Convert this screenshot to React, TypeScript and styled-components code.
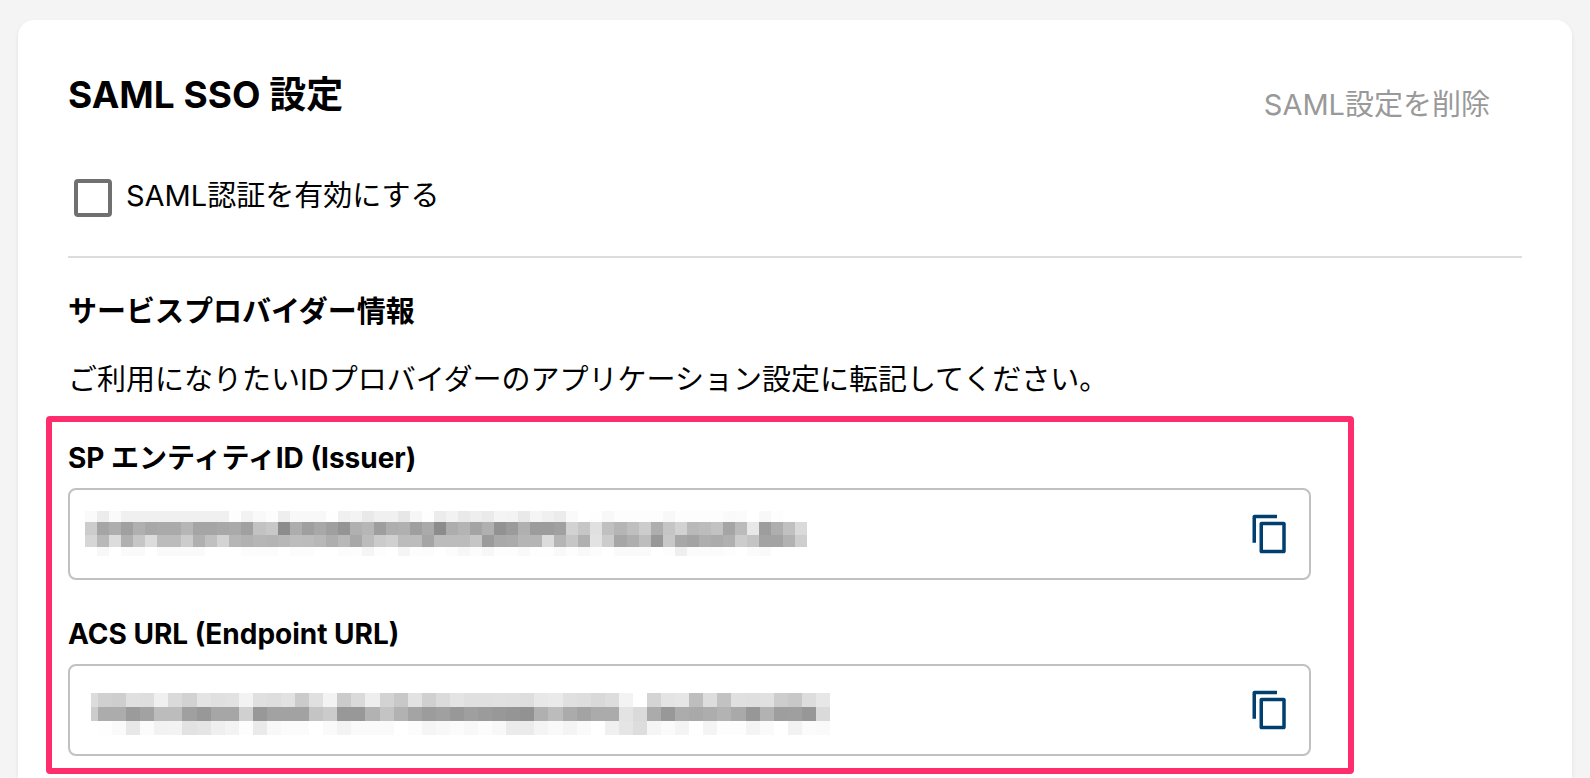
import React, { useId, useState } from "react";
import styled, { createGlobalStyle } from "styled-components";

const GlobalStyle = createGlobalStyle`
  *, *::before, *::after { box-sizing: border-box; }
  body {
    margin: 0;
    background: #f4f4f4;
    color: #000;
    font-family: Inter, "Noto Sans CJK JP", sans-serif;
    font-size: 29px;
    line-height: 40px;
  }
  h1, h2, p { margin: 0; }
`;

const Page = styled.main`
  display: flex;
  flex-direction: column;
  min-height: 100vh;
  padding: 20px 18px 0;
`;

const Card = styled.section`
  flex: 1;
  padding: 48px 50px 4px;
  background: #fff;
  border-radius: 16px 16px 0 0;
  box-shadow: 0 2px 4px rgba(0, 0, 0, 0.08);
`;

const Header = styled.header`
  display: flex;
  justify-content: space-between;
  align-items: flex-start;
`;

const Title = styled.h1`
  font-size: 37px;
  line-height: 54px;
  font-weight: 700;
`;

const DeleteButton = styled.button`
  margin: 17px 32px 0 0;
  padding: 0;
  border: 0;
  background: none;
  color: #999;
  font: inherit;
  cursor: pointer;
`;

const EnableRow = styled.label`
  display: flex;
  align-items: center;
  gap: 14px;
  width: fit-content;
  margin-top: 50px;
  padding-left: 6px;
  cursor: pointer;
`;

const Checkbox = styled.input`
  appearance: none;
  width: 38px;
  height: 38px;
  margin: 4px 0 0;
  border: 4px solid #707070;
  border-radius: 4px;
  background: #fff;

  &:checked {
    background: #707070;
  }
`;

const Divider = styled.hr`
  height: 2px;
  margin: 39px 0 0;
  border: 0;
  background: #dcdcdc;
`;

const SectionTitle = styled.h2`
  margin-top: 34px;
  font-size: 29px;
  font-weight: 700;
`;

const Description = styled.p`
  margin-top: 28px;
`;

const Highlight = styled.div`
  display: grid;
  gap: 34px;
  margin: 16px 168px 0 -22px;
  padding: 16px 37px 12px 16px;
  border: 6px solid #ff2d6e;
  border-radius: 4px;
`;

const Field = styled.div`
  display: grid;
  gap: 10px;
`;

const FieldLabel = styled.label`
  font-size: 28px;
  font-weight: 700;
`;

const FieldBox = styled.div`
  position: relative;
  display: flex;
  align-items: center;
  height: 92px;
  padding-right: 18px;
  border: 2px solid #c1c1c1;
  border-radius: 8px;
`;

const FieldInput = styled.input`
  flex: 1;
  min-width: 0;
  height: 100%;
  padding: 0 16px;
  border: 0;
  outline: 0;
  background: transparent;
  font: inherit;
`;

const CopyButton = styled.button`
  display: flex;
  padding: 0;
  border: 0;
  background: none;
  color: #003f70;
  cursor: pointer;
`;

const Mosaic = styled.svg<{ $left: number; $top: number }>`
  position: absolute;
  left: ${(p) => p.$left}px;
  top: ${(p) => p.$top}px;
  pointer-events: none;
`;

interface MaskData {
  left: number;
  top: number;
  width: number;
  lead: number;
  heights: number[];
  rows: string[];
}

/* Grey levels of the redaction mosaics, two hex digits per block. */
const entityMask: MaskData = {
  left: 15,
  top: 21,
  width: 722,
  lead: 0,
  heights: [11, 13, 12, 9],
  rows: [
    "faecfaf0f0f0f0f0f0f0f0f0fdf2f9fdeef8f8f8fef0f3e9f0f0e7f6feec" +
      "f2e9eeeaf4f3e9f5f0ecfafffef8fdfdfdfdf8fdfdfdfdfafbfff8fdffff",
    "cca5aea0b0a8aaaab6a5a5a8aaa0c2c88cad9fa89f94b0b69eaeb09faa8c" +
      "adb4a4b0929bb09c9ca0d2c6e0c0b5bfccaec5d2b9bcc2a5bbe89daec0da",
    "d6b8dcb0c6dcbcbcccb0c0d3b6b2b6b4b7bdbcb8aeb8a8bccbd0bcbca5bc" +
      "bcbcc69ba9abb5b5dcb5c6b0e2cca6aebd98c8a8a3aeabb0ccc4a3a3b2ce",
    "fff8fffafafffafafafafffffffcfcfcfffcfcfffffcfdf5fdfff5fdfcff" +
      "fcf7fcf7fdfdf9fefef9fdf9fcfffafafafffdeffbfbfbfdfffbfaffffff",
  ],
};

const acsMask: MaskData = {
  left: 21,
  top: 27,
  width: 739,
  lead: 7,
  heights: [14, 14, 14],
  rows: [
    "dcd0cee0def0dad2e4e0e2f3e0dee2cbe0f3cbdaeed3c8e2d0db" +
      "e4e0e0e1e0dee8eae0ded9ddf3ffd4e4e6beddc2e0dfe1cdc8dde7",
    "ccacac9ba2bcbca098a6a6d098a2a2a2c4cb9898b2c4b2a49ca0" +
      "989f9b989592b0bcaba3ababe3daab98aca9adb3a997b29e9f97da",
    "fffefae8fbf2f3e2e5eff3fdeaf8fbfbfffaf3fafafafffcf5f8" +
      "fbf8fcf8ebebf4f9f4fafff0e5ddf5faf4fff4fdfdf4fafff2fbfa",
  ],
};

function RedactedValue({ mask }: { mask: MaskData }) {
  const height = mask.heights.reduce((a, b) => a + b, 0);
  const blocks: React.ReactNode[] = [];
  let y = 0;
  mask.rows.forEach((row, r) => {
    const levels = row.match(/../g) ?? [];
    const tail = mask.lead ? levels.length - 1 : levels.length;
    const edge = (i: number) =>
      mask.lead
        ? i === 0
          ? 0
          : Math.round(mask.lead + ((i - 1) * (mask.width - mask.lead)) / tail)
        : Math.round((i * mask.width) / tail);
    levels.forEach((level, i) => {
      blocks.push(
        <rect
          key={`${r}-${i}`}
          x={edge(i)}
          y={y}
          width={edge(i + 1) - edge(i)}
          height={mask.heights[r]}
          fill={`#${level}${level}${level}`}
        />
      );
    });
    y += mask.heights[r];
  });
  return (
    <Mosaic
      $left={mask.left}
      $top={mask.top}
      width={mask.width}
      height={height}
      aria-hidden="true"
    >
      {blocks}
    </Mosaic>
  );
}

function CopyIcon() {
  return (
    <svg width="42" height="42" viewBox="0 0 24 24" fill="currentColor" aria-hidden="true">
      <path d="M16 1H3.200C2.500 1 2 1.500 2 2.200V17h2V3h12zM19.800 5H7.200C6.500 5 6 5.500 6 6.200v15.600C6 22.500 6.500 23 7.200 23h12.600c.7 0 1.200-.5 1.200-1.200V6.200C21 5.500 20.500 5 19.800 5zM19 21H8V7h11z" />
    </svg>
  );
}

function CopyField({ label, mask }: { label: string; mask: MaskData }) {
  const id = useId();
  return (
    <Field>
      <FieldLabel htmlFor={id}>{label}</FieldLabel>
      <FieldBox>
        <FieldInput id={id} type="text" readOnly value="" />
        <RedactedValue mask={mask} />
        <CopyButton type="button" aria-label={`${label} をコピー`}>
          <CopyIcon />
        </CopyButton>
      </FieldBox>
    </Field>
  );
}

export default function App() {
  const [enabled, setEnabled] = useState(false);
  return (
    <>
      <GlobalStyle />
      <Page>
        <Card>
          <Header>
            <Title>SAML SSO 設定</Title>
            <DeleteButton type="button">SAML設定を削除</DeleteButton>
          </Header>
          <EnableRow>
            <Checkbox
              type="checkbox"
              checked={enabled}
              onChange={(e) => setEnabled(e.target.checked)}
            />
            SAML認証を有効にする
          </EnableRow>
          <Divider />
          <SectionTitle>サービスプロバイダー情報</SectionTitle>
          <Description>
            ご利用になりたいIDプロバイダーのアプリケーション設定に転記してください。
          </Description>
          <Highlight>
            <CopyField label="SP エンティティID (Issuer)" mask={entityMask} />
            <CopyField label="ACS URL (Endpoint URL)" mask={acsMask} />
          </Highlight>
        </Card>
      </Page>
    </>
  );
}
